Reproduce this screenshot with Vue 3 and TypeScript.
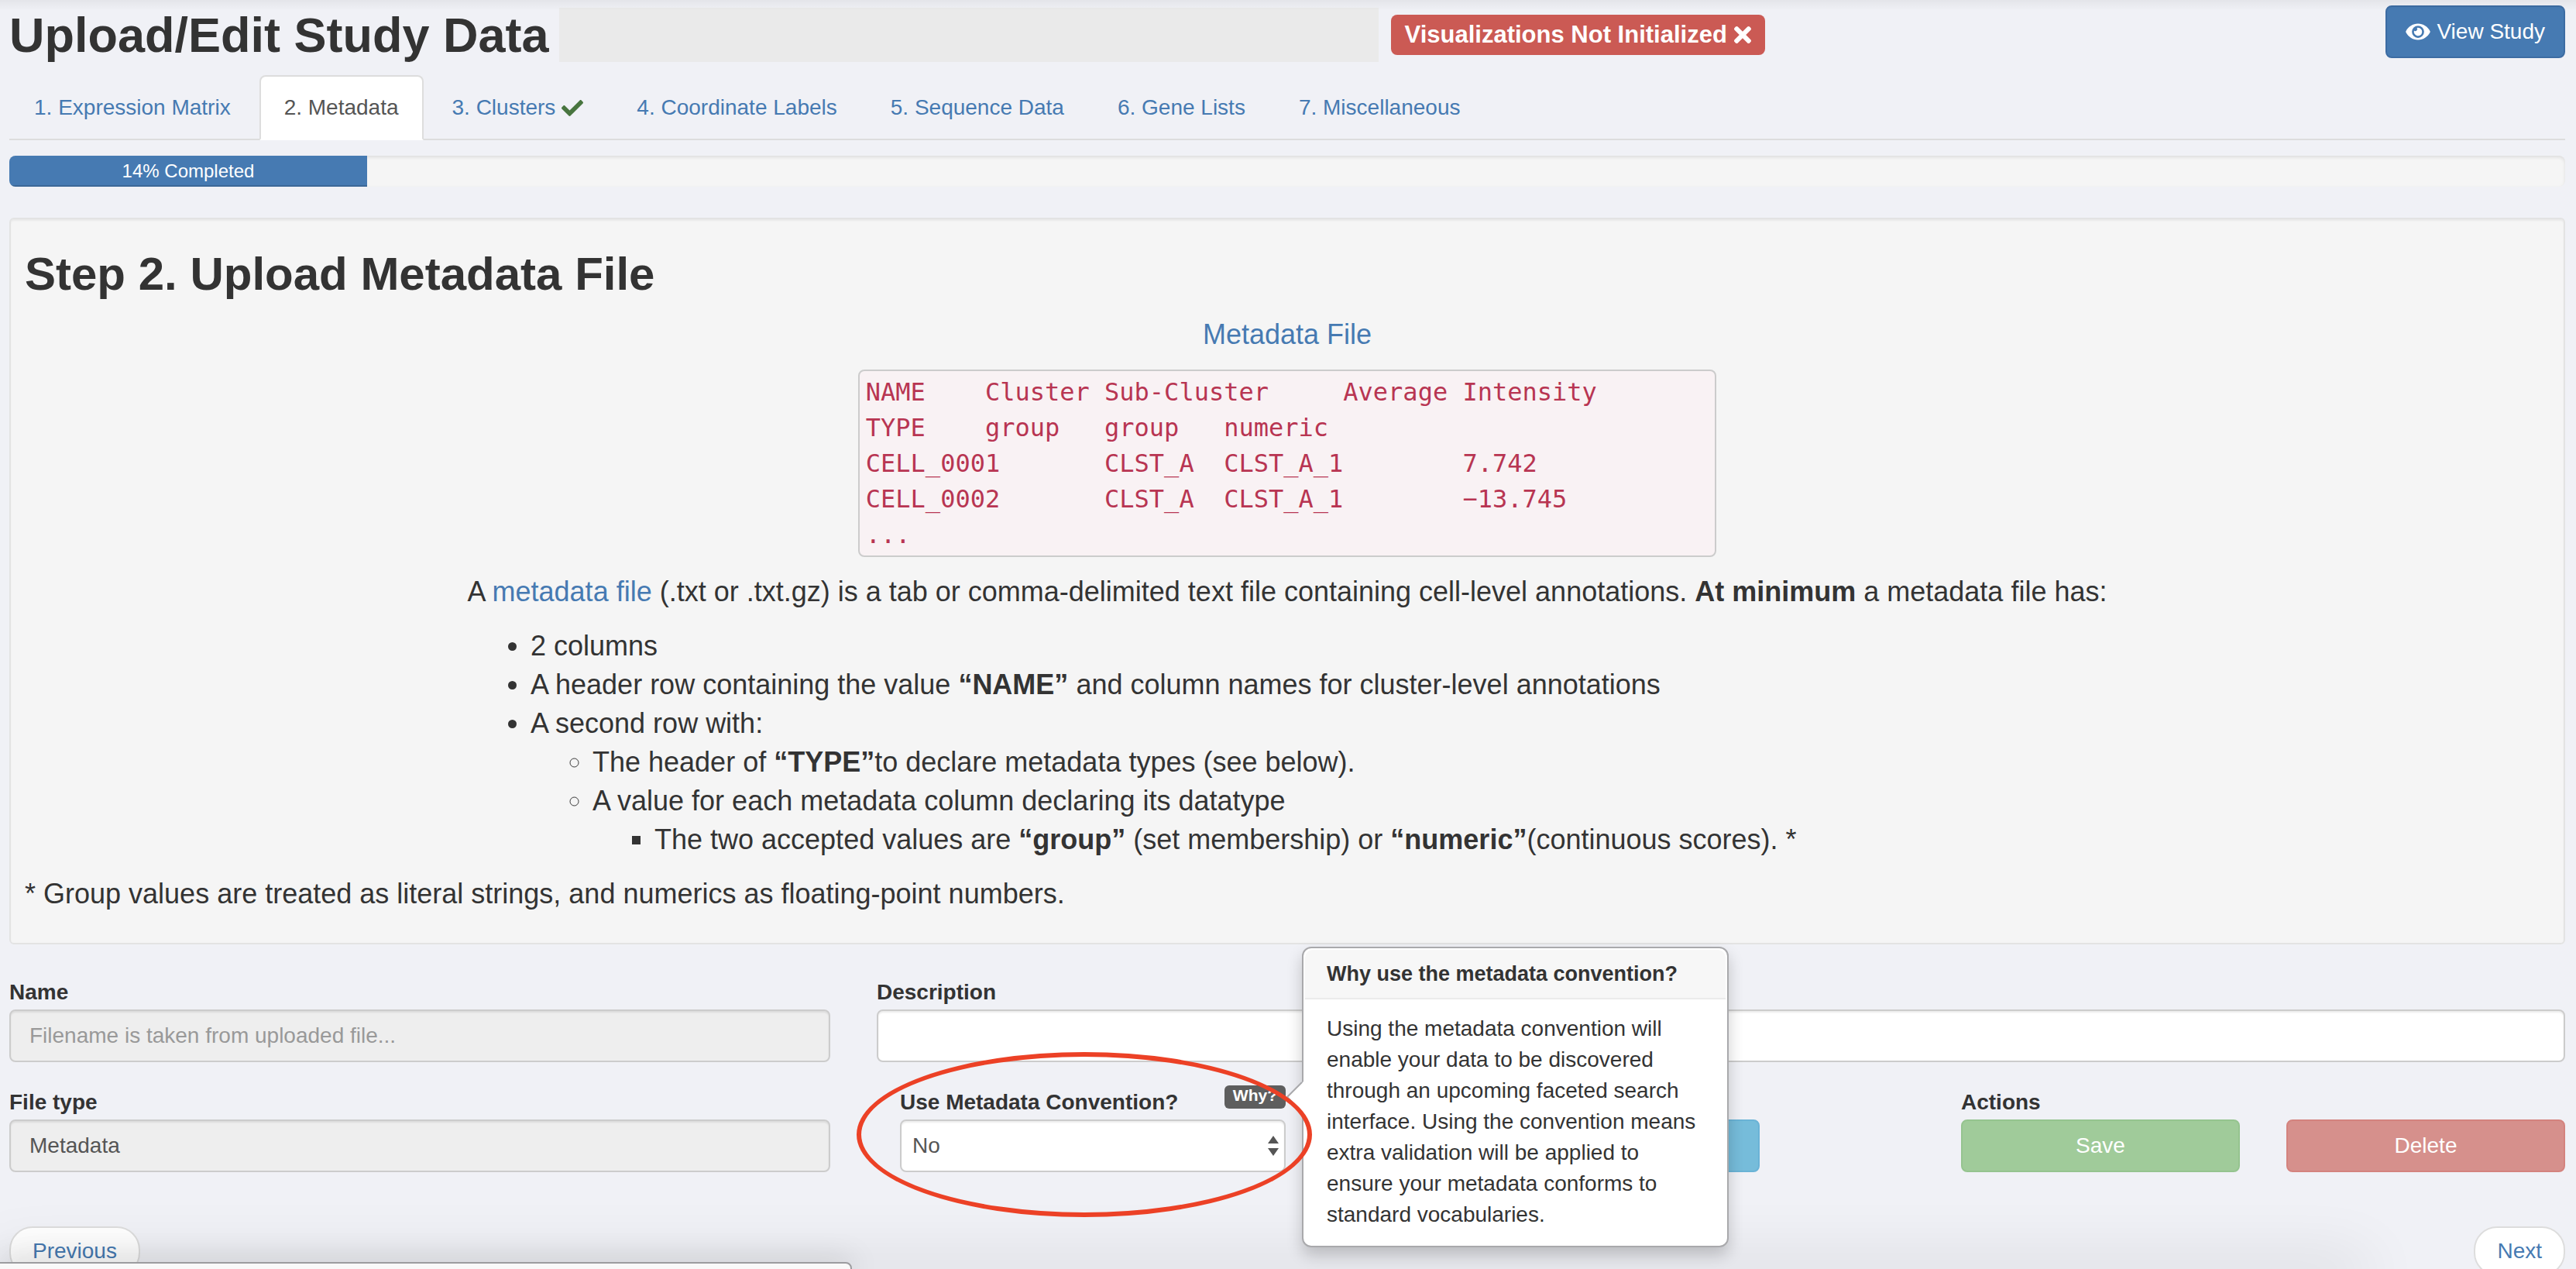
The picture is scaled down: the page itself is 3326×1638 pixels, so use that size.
<script setup lang="ts">
import { ref } from 'vue'

interface Tab {
  label: string
  done?: boolean
}

const tabs: Tab[] = [
  { label: '1. Expression Matrix' },
  { label: '2. Metadata' },
  { label: '3. Clusters', done: true },
  { label: '4. Coordinate Labels' },
  { label: '5. Sequence Data' },
  { label: '6. Gene Lists' },
  { label: '7. Miscellaneous' },
]
const activeTab = ref(1)
const progress = 14

const sample = [
  'NAME    Cluster Sub-Cluster     Average Intensity',
  'TYPE    group   group   numeric',
  'CELL_0001       CLST_A  CLST_A_1        7.742',
  'CELL_0002       CLST_A  CLST_A_1        −13.745',
  '...',
].join('\n')

const useConvention = ref('No')
const description = ref('')
</script>

<template>
  <div class="page">
    <header class="header">
      <div class="title-group">
        <h1>Upload/Edit Study Data</h1>
        <div class="study-name"></div>
        <span class="status-label">
          Visualizations Not Initialized
          <svg class="icon-times" viewBox="0 80 352 352" aria-hidden="true">
            <path d="M242.72 256l100.07-100.07c12.28-12.28 12.28-32.19 0-44.48l-22.24-22.24c-12.28-12.28-32.19-12.28-44.48 0L176 189.28 75.93 89.21c-12.28-12.28-32.19-12.28-44.48 0L9.21 111.45c-12.28 12.28-12.28 32.19 0 44.48L109.28 256 9.21 356.07c-12.28 12.28-12.28 32.19 0 44.48l22.24 22.24c12.28 12.28 32.2 12.28 44.48 0L176 322.72l100.07 100.07c12.28 12.28 32.2 12.28 44.48 0l22.24-22.24c12.28-12.28 12.28-32.19 0-44.48L242.72 256z" />
          </svg>
        </span>
      </div>
      <button type="button" class="btn btn-primary">
        <svg class="icon-eye" viewBox="0 0 576 512" aria-hidden="true">
          <path d="M572.52 241.4C518.29 135.59 410.93 64 288 64S57.68 135.64 3.48 241.41a32.35 32.35 0 0 0 0 29.19C57.71 376.41 165.07 448 288 448s230.32-71.64 284.52-177.41a32.35 32.35 0 0 0 0-29.19zM288 400a144 144 0 1 1 144-144 143.93 143.93 0 0 1-144 144zm0-240a95.31 95.31 0 0 0-25.31 3.79 47.85 47.85 0 0 1-66.9 66.9A95.78 95.78 0 1 0 288 160z" />
        </svg>
        View Study
      </button>
    </header>

    <nav class="tabs">
      <a
        v-for="(tab, i) in tabs"
        :key="tab.label"
        href="#"
        class="tab"
        :class="{ active: i === activeTab }"
        @click.prevent="activeTab = i"
      >
        {{ tab.label }}
        <svg v-if="tab.done" class="icon-check" viewBox="0 64 512 384" aria-hidden="true">
          <path d="M173.898 439.404l-166.4-166.4c-9.997-9.997-9.997-26.206 0-36.204l36.203-36.204c9.997-9.998 26.207-9.998 36.204 0L192 312.69 432.095 72.596c9.997-9.997 26.207-9.997 36.204 0l36.203 36.204c9.997 9.997 9.997 26.206 0 36.204l-294.4 294.401c-9.998 9.997-26.207 9.997-36.204-.001z" />
        </svg>
      </a>
    </nav>

    <div class="progress">
      <div class="progress-bar" :style="{ width: progress + '%' }">{{ progress }}% Completed</div>
    </div>

    <section class="well">
      <h2>Step 2. Upload Metadata File</h2>
      <p class="centered"><a href="#">Metadata File</a></p>
      <pre class="sample">{{ sample }}</pre>
      <p class="centered">
        A <a href="#">metadata file</a> (.txt or .txt.gz) is a tab or comma-delimited text file containing
        cell-level annotations. <b>At minimum</b> a metadata file has:
      </p>
      <ul class="rules">
        <li>2 columns</li>
        <li>A header row containing the value <b>“NAME”</b> and column names for cluster-level annotations</li>
        <li>
          A second row with:
          <ul>
            <li>The header of <b>“TYPE”</b>to declare metadata types (see below).</li>
            <li>
              A value for each metadata column declaring its datatype
              <ul>
                <li>
                  The two accepted values are <b>“group”</b> (set membership) or
                  <b>“numeric”</b>(continuous scores). *
                </li>
              </ul>
            </li>
          </ul>
        </li>
      </ul>
      <p>* Group values are treated as literal strings, and numerics as floating-point numbers.</p>
    </section>

    <form class="form" @submit.prevent>
      <div class="field span-4">
        <label for="name">Name</label>
        <input id="name" class="control" type="text" placeholder="Filename is taken from uploaded file..." disabled />
      </div>
      <div class="field span-8">
        <label for="description">Description</label>
        <input id="description" v-model="description" class="control" type="text" />
      </div>

      <div class="field span-4">
        <label for="file-type">File type</label>
        <input id="file-type" class="control" type="text" value="Metadata" disabled />
      </div>
      <div class="span-5 middle">
        <div class="field convention">
          <div class="label-row">
            <label for="convention">Use Metadata Convention?</label>
            <div class="why">
              <button type="button" class="badge" aria-describedby="why-popover">Why?</button>
              <div id="why-popover" class="popover" role="tooltip">
                <svg class="popover-arrow" viewBox="0 0 22 44" aria-hidden="true">
                  <path d="M22 2 1 22l21 20z" fill="#fff" />
                  <path d="M20 3 1 22l19 19" fill="none" stroke="#a9a9ac" stroke-width="2" />
                </svg>
                <h3>Why use the metadata convention?</h3>
                <p>
                  Using the metadata convention will enable your data to be discovered through an upcoming faceted
                  search interface. Using the convention means extra validation will be applied to ensure your
                  metadata conforms to standard vocabularies.
                </p>
              </div>
            </div>
          </div>
          <div class="select-wrap">
            <select id="convention" v-model="useConvention" class="control">
              <option>No</option>
              <option>Yes</option>
            </select>
            <svg class="select-arrows" viewBox="0 0 14 26" aria-hidden="true">
              <path d="M7 0l7 10H0zM0 16h14L7 26z" />
            </svg>
          </div>
          <div class="highlight-ring"></div>
        </div>
        <button type="button" class="btn btn-info" aria-label="Choose file" disabled></button>
      </div>
      <div class="field span-3">
        <span class="actions-title">Actions</span>
        <div class="actions">
          <button type="submit" class="btn btn-success" disabled>Save</button>
          <button type="button" class="btn btn-danger" disabled>Delete</button>
        </div>
      </div>
    </form>

    <nav class="pager">
      <a href="#">Previous</a>
      <a href="#">Next</a>
    </nav>

    <div class="top-shade"></div>
    <div class="bottom-shade"></div>
    <div class="status-bar"></div>
  </div>
</template>

<style>
body {
  margin: 0;
  background: #f0f1f6;
}
</style>

<style scoped>
* {
  box-sizing: border-box;
}

.page {
  position: relative;
  height: 100vh;
  overflow: hidden;
  padding: 7px 14px 0 12px;
  background: #f0f1f6;
  color: #333;
  font: 28px/40px "Liberation Sans", Arial, sans-serif;
}

a {
  color: #467ab2;
  text-decoration: none;
}

svg {
  display: block;
  flex: none;
  fill: currentColor;
}

p {
  margin: 0;
}

/* header */
.header {
  display: flex;
  align-items: flex-start;
  justify-content: space-between;
  margin-bottom: 17px;
}

.title-group {
  display: flex;
  flex: 1;
  align-items: center;
  padding-top: 3px;
}

h1 {
  margin: 0 13px 0 0;
  font-size: 63px;
  line-height: 68px;
  white-space: nowrap;
}

.study-name {
  flex: 0 1 1058px;
  height: 70px;
  margin-right: 16px;
  background: #eaeaea;
}

.status-label {
  display: flex;
  align-items: center;
  gap: 9px;
  height: 52px;
  padding: 0 18px;
  border-radius: 8px;
  background: #cb5a54;
  color: #fff;
  font-size: 31px;
  font-weight: bold;
  white-space: nowrap;
}

.icon-times {
  width: 22px;
  height: 22px;
}

.btn {
  display: flex;
  align-items: center;
  justify-content: center;
  height: 68px;
  padding: 0 24px;
  border: 2px solid;
  border-radius: 8px;
  color: #fff;
  font: inherit;
}

.btn-primary {
  gap: 8px;
  background: #467ab2;
  border-color: #3c6ca3;
}

.icon-eye {
  width: 32px;
  height: 28px;
}

/* tabs */
.tabs {
  display: flex;
  gap: 5px;
  border-bottom: 2px solid #ddd;
}

.tab {
  display: flex;
  align-items: center;
  gap: 8px;
  margin-bottom: -2px;
  padding: 20px 30px;
  border: 2px solid transparent;
  border-radius: 8px 8px 0 0;
}

.tab.active {
  border-color: #ddd #ddd #fff;
  background: #fff;
  color: #555;
}

.icon-check {
  width: 28px;
  height: 21px;
  color: #48753f;
}

/* progress */
.progress {
  height: 40px;
  margin: 20px 0 40px;
  overflow: hidden;
  border-radius: 8px;
  background: #f5f5f5;
  box-shadow: inset 0 2px 4px rgba(0, 0, 0, 0.1);
}

.progress-bar {
  background: #467ab2;
  box-shadow: inset 0 -2px 0 rgba(0, 0, 0, 0.15);
  color: #fff;
  font-size: 24px;
  text-align: center;
}

/* instructions */
.well {
  margin-bottom: 48px;
  padding: 18px;
  border: 2px solid #e3e3e3;
  border-radius: 6px;
  background: #f5f5f5;
  box-shadow: inset 0 2px 2px rgba(0, 0, 0, 0.05);
  font-size: 36px;
  line-height: 50px;
}

.well > * {
  margin-bottom: 20px;
}

h2 {
  margin: 20px 0 0;
  font-size: 60px;
  line-height: 66px;
}

.centered {
  text-align: center;
}

.sample {
  width: 34%;
  margin: 0 auto 20px;
  padding: 4px 8px;
  border: 2px solid #ccc;
  border-radius: 8px;
  background: #f9f2f4;
  color: #b83552;
  font: 32px/46px "DejaVu Sans Mono", monospace;
}

ul {
  margin: 0;
  padding-left: 80px;
}

.rules {
  max-width: 2114px;
  margin: 0 auto 20px;
}

/* form */
.form {
  display: grid;
  grid-template-columns: repeat(12, minmax(0, 1fr));
  gap: 38px 60px;
}

.span-3 { grid-column: span 3; }
.span-4 { grid-column: span 4; }
.span-5 { grid-column: span 5; }
.span-8 { grid-column: span 8; }

label,
.actions-title {
  display: block;
  margin-bottom: 8px;
  font-weight: bold;
  line-height: 28px;
}

.control {
  display: block;
  width: 100%;
  height: 68px;
  padding: 0 24px;
  border: 2px solid #ccc;
  border-radius: 8px;
  background: #fff;
  box-shadow: inset 0 2px 2px rgba(0, 0, 0, 0.08);
  color: #555;
  font: inherit;
  opacity: 1;
}

.control:disabled {
  background: #eee;
}

.control::placeholder {
  color: #999;
}

select.control {
  padding: 0 14px;
  appearance: none;
}

.middle {
  display: grid;
  grid-template-columns: minmax(0, 498fr) minmax(0, 552fr);
  align-items: end;
  gap: 60px;
  padding: 0 200px 0 30px;
}

.convention {
  position: relative;
}

.label-row {
  display: flex;
  align-items: flex-start;
  justify-content: space-between;
  height: 36px;
}

.why {
  position: relative;
  margin-top: -8px;
}

.badge {
  display: block;
  height: 30px;
  padding: 0 11px 4px;
  border: 0;
  border-radius: 6px;
  background: #5e5e5e;
  color: #fff;
  font: bold 21px/26px "Liberation Sans", Arial, sans-serif;
}

.select-wrap {
  position: relative;
}

.select-arrows {
  position: absolute;
  top: 21px;
  right: 9px;
  width: 14px;
  height: 26px;
  color: #555;
  pointer-events: none;
}

.highlight-ring {
  position: absolute;
  z-index: 3;
  inset: -51px -34px -58px -56px;
  border: 6px solid #ec4126;
  border-radius: 50%;
  pointer-events: none;
}

.popover {
  position: absolute;
  z-index: 2;
  top: 50%;
  left: 100%;
  width: 551px;
  margin-left: 21px;
  padding: 2px;
  transform: translateY(-50%);
  border: 2px solid #a9a9ac;
  border-radius: 12px;
  background: #fff;
  box-shadow: 0 10px 20px rgba(0, 0, 0, 0.2);
}

.popover h3 {
  margin: 0;
  padding: 16px 28px;
  border-bottom: 2px solid #ebebeb;
  border-radius: 10px 10px 0 0;
  background: #f7f7f7;
  font-size: 27px;
  line-height: 30px;
}

.popover p {
  padding: 18px 28px;
}

.popover-arrow {
  position: absolute;
  top: 50%;
  left: -22px;
  width: 22px;
  height: 44px;
  margin-top: -22px;
}

.btn-info {
  background: #76bcda;
  border-color: #6ab3d6;
}

.actions {
  display: flex;
  gap: 60px;
}

.actions .btn {
  flex: 1;
}

.btn-success {
  background: #a0cb9a;
  border-color: #95c48f;
}

.btn-danger {
  background: #d6908c;
  border-color: #d4837e;
}

/* pager */
.pager {
  display: flex;
  justify-content: space-between;
  margin-top: 70px;
}

.pager a {
  padding: 10px 28px;
  border: 2px solid #ddd;
  border-radius: 30px;
  background: #fff;
}

/* window edges */
.top-shade,
.bottom-shade {
  position: absolute;
  right: 0;
  left: 0;
  pointer-events: none;
}

.top-shade {
  top: 0;
  height: 14px;
  background: linear-gradient(rgba(0, 0, 0, 0.05), transparent);
}

.bottom-shade {
  right: 280px;
  bottom: -10px;
  height: 10px;
  box-shadow: 0 0 80px 10px rgba(0, 0, 0, 0.14);
}

.status-bar {
  position: absolute;
  bottom: -2px;
  left: -2px;
  width: 1102px;
  height: 11px;
  border: 2px solid #9c9c9f;
  border-radius: 0 8px 0 0;
  background: #f9f9f9;
  box-shadow: 0 0 36px rgba(0, 0, 0, 0.25);
}
</style>
